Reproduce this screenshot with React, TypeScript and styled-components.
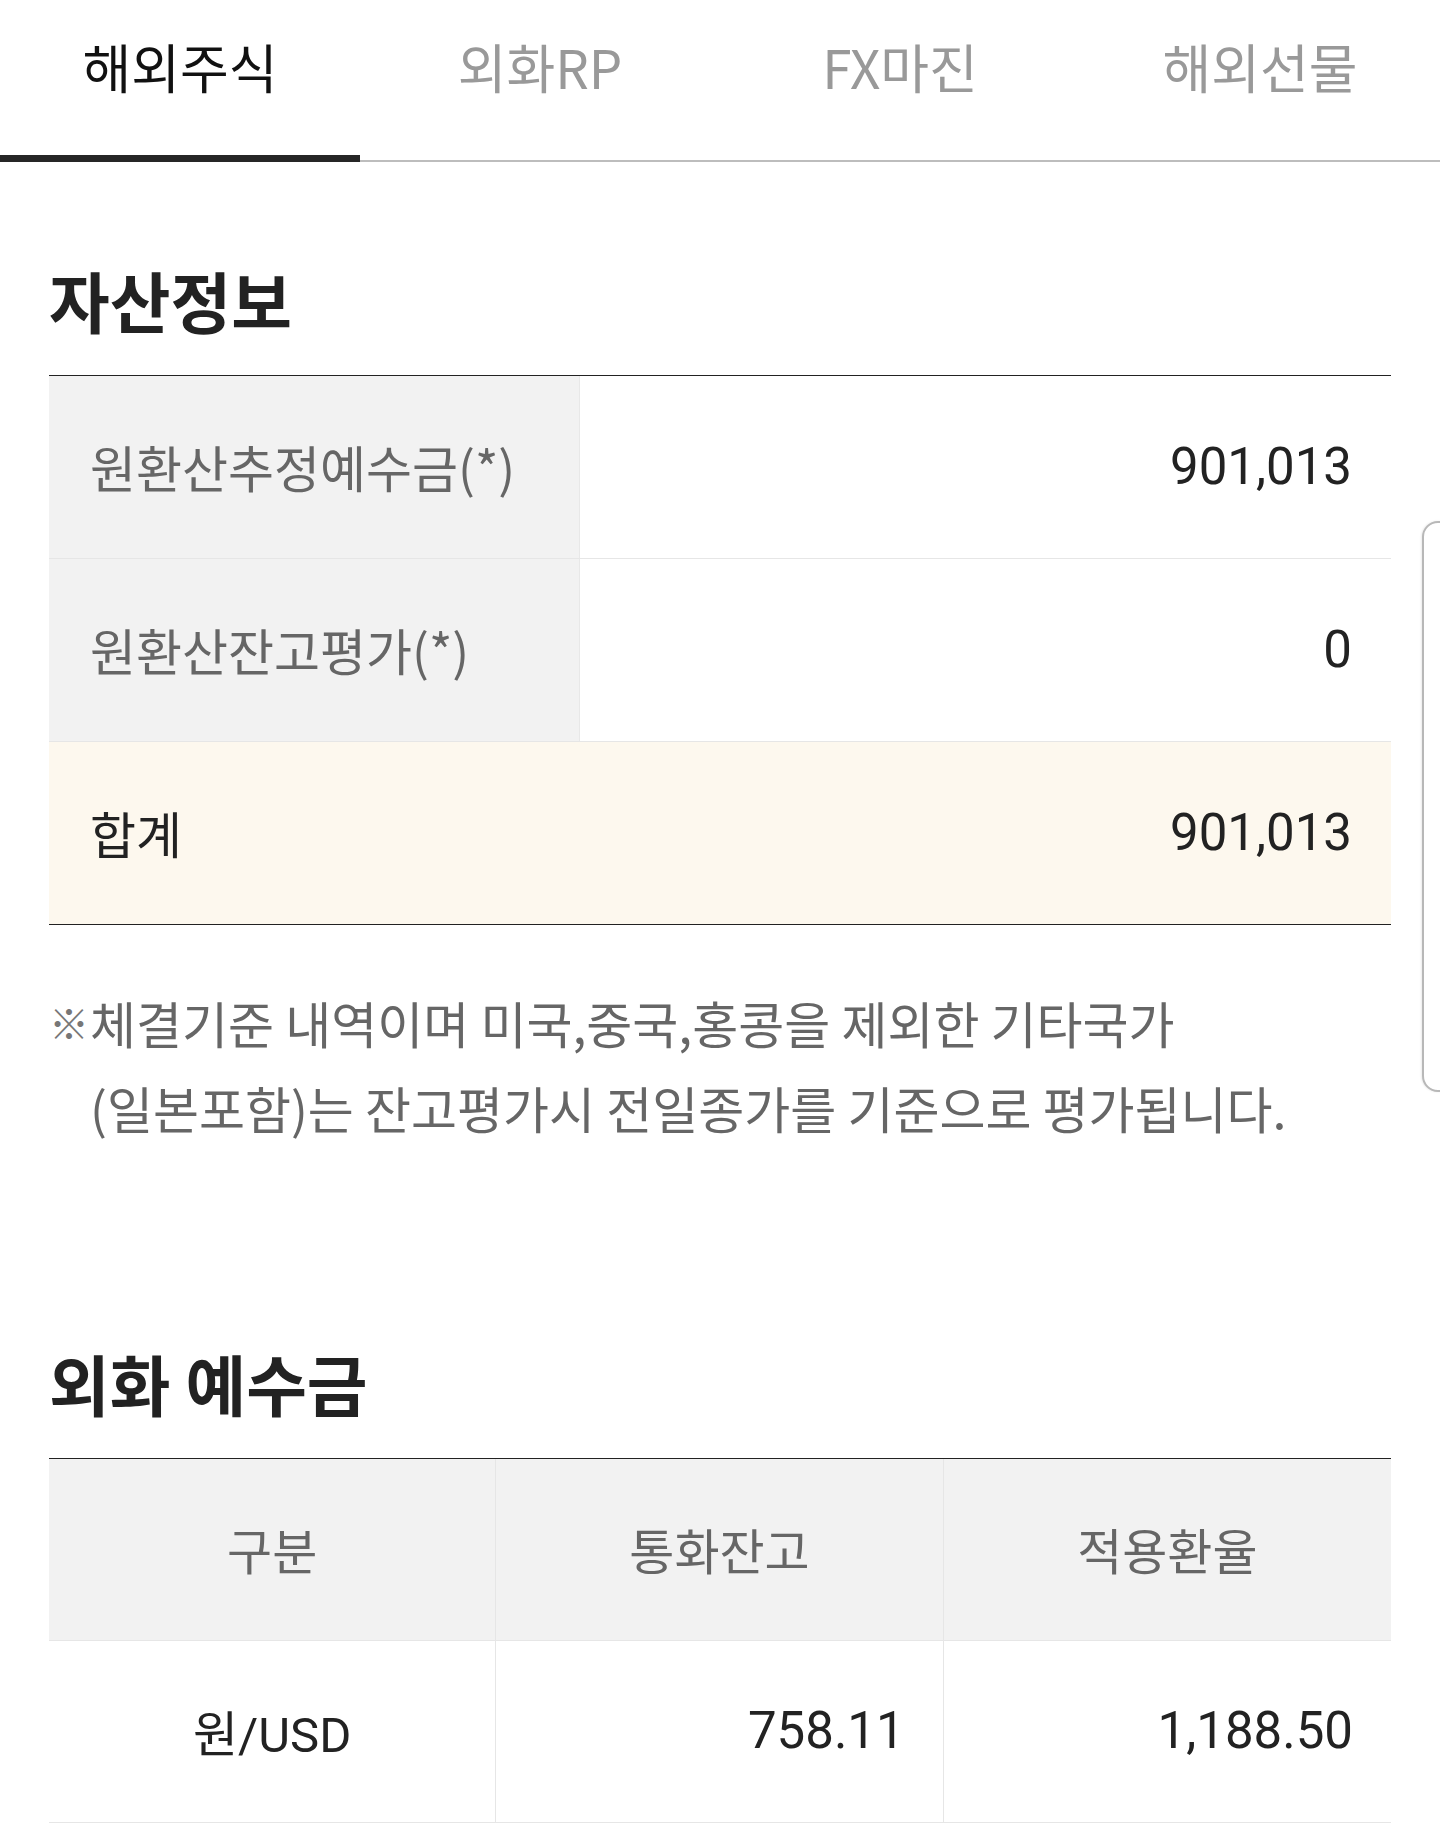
import React, { useState } from 'react';
import styled, { createGlobalStyle } from 'styled-components';

const GlobalStyle = createGlobalStyle`
  html, body {
    margin: 0;
    padding: 0;
    background: #fff;
  }
  body {
    font-family: "Noto Sans CJK KR", "Noto Sans", sans-serif;
    color: #222;
  }
`;

const tabs = ['해외주식', '외화RP', 'FX마진', '해외선물'];

const assetRows = [
  { label: '원환산추정예수금(*)', value: '901,013' },
  { label: '원환산잔고평가(*)', value: '0' },
];

const fxRows = [
  { kind: '원/USD', balance: '758.11', rate: '1,188.50' },
];

const App = () => {
  const [activeTab, setActiveTab] = useState(0);

  return (
    <>
      <GlobalStyle/>
      <Page>
        <TabBar>
          {tabs.map((t, i) => (
            <Tab key={t} $active={activeTab === i} onClick={() => setActiveTab(i)}>{t}</Tab>
          ))}
        </TabBar>

        <Content>
          <SectionTitle>자산정보</SectionTitle>
          <InfoTable>
            {assetRows.map((row) => (
              <InfoRow key={row.label}>
                <InfoLabel>{row.label}</InfoLabel>
                <InfoValue>{row.value}</InfoValue>
              </InfoRow>
            ))}
            <InfoRow $total>
              <InfoLabel $total>합계</InfoLabel>
              <InfoValue>901,013</InfoValue>
            </InfoRow>
          </InfoTable>

          <Note>
            <NoteMark>※</NoteMark>
            <NoteText>
              체결기준 내역이며 미국,중국,홍콩을 제외한 기타국가<br/>
              (일본포함)는 잔고평가시 전일종가를 기준으로 평가됩니다.
            </NoteText>
          </Note>

          <SectionTitle $gap={197}>외화 예수금</SectionTitle>
          <FxTable>
            <FxHead>구분</FxHead>
            <FxHead>통화잔고</FxHead>
            <FxHead>적용환율</FxHead>
            {fxRows.map((row) => (
              <React.Fragment key={row.kind}>
                <FxCell $center>{row.kind}</FxCell>
                <FxCell $num>{row.balance}</FxCell>
                <FxCell $num>{row.rate}</FxCell>
              </React.Fragment>
            ))}
          </FxTable>
        </Content>

        <SideHandle/>
      </Page>
    </>
  );
}

const Page = styled.div`
  position: relative;
  width: 100%;
  min-height: 1824px;
  overflow: hidden;
`;
const TabBar = styled.div`
  display: grid;
  grid-template-columns: repeat(4, 1fr);
  border-bottom: 2px solid #bdbdbd;
`;
const Tab = styled.div<{ $active?: boolean }>`
  display: flex;
  justify-content: center;
  align-items: flex-start;
  box-sizing: border-box;
  padding-top: 36px;
  margin-bottom: ${p => p.$active ? '-2px' : '0'};
  border-bottom: ${p => p.$active ? '7px solid #262626' : '0'};
  height: ${p => p.$active ? '162px' : '160px'};
  font-size: 53px;
  line-height: 60px;
  color: ${p => p.$active ? '#111' : '#999'};
  cursor: pointer;
`;
const Content = styled.div`
  padding: 0 49px;
`;
const SectionTitle = styled.h2<{ $gap?: number }>`
  margin: ${p => p.$gap ?? 102}px 0 41px;
  font-size: 66px;
  line-height: 70px;
  font-weight: 700;
  color: #222;
`;
const InfoTable = styled.div`
  border-top: 1px solid #222;
  border-bottom: 1px solid #222;
`;
const InfoRow = styled.div<{ $total?: boolean }>`
  display: grid;
  grid-template-columns: 531px 1fr;
  height: 182px;
  background: ${p => p.$total ? '#fdf8ee' : '#fff'};
  &:not(:last-child) {
    border-bottom: 1px solid #e6e6e6;
  }
`;
const InfoLabel = styled.div<{ $total?: boolean }>`
  display: flex;
  align-items: center;
  padding-left: 41px;
  padding-bottom: 3px;
  background: ${p => p.$total ? 'transparent' : '#f2f2f2'};
  border-right: 1px solid ${p => p.$total ? 'transparent' : '#e8e8e8'};
  font-size: 50px;
  color: ${p => p.$total ? '#222' : '#666'};
`;
const InfoValue = styled.div`
  display: flex;
  align-items: center;
  justify-content: flex-end;
  padding-right: 39px;
  padding-bottom: 2px;
  font-family: Roboto, "Noto Sans CJK KR", sans-serif;
  font-size: 51px;
  color: #222;
`;
const Note = styled.div`
  display: flex;
  margin-top: 55px;
  font-size: 50px;
  line-height: 85px;
  color: #666;
`;
const NoteMark = styled.span`
  flex: 0 0 41px;
  font-size: 40px;
  color: #777;
`;
const NoteText = styled.p`
  margin: 0;
`;
const FxTable = styled.div`
  display: grid;
  grid-template-columns: repeat(3, 1fr);
  border-top: 1px solid #222;
`;
const FxHead = styled.div`
  display: flex;
  align-items: center;
  justify-content: center;
  height: 182px;
  padding-bottom: 3px;
  box-sizing: border-box;
  background: #f2f2f2;
  border-bottom: 1px solid #e6e6e6;
  font-size: 49px;
  color: #666;
  &:not(:nth-child(3n)) {
    border-right: 1px solid #e6e6e6;
  }
`;
const FxCell = styled.div<{ $center?: boolean; $num?: boolean }>`
  display: flex;
  align-items: center;
  justify-content: ${p => p.$center ? 'center' : 'flex-end'};
  height: 182px;
  padding-right: ${p => p.$num ? '38px' : '0'};
  padding-bottom: 3px;
  box-sizing: border-box;
  border-bottom: 1px solid #e6e6e6;
  font-family: Roboto, "Noto Sans CJK KR", sans-serif;
  font-size: ${p => p.$num ? '51px' : '49px'};
  color: #222;
  &:not(:nth-child(3n)) {
    border-right: 1px solid #e6e6e6;
  }
`;
const SideHandle = styled.div`
  position: absolute;
  top: 521px;
  right: -20px;
  width: 34px;
  height: 567px;
  background: #fff;
  border: 2px solid #b8b8b8;
  border-radius: 16px;
  box-shadow: -1px 0 2px rgba(0, 0, 0, 0.08);
`;

export default App;
